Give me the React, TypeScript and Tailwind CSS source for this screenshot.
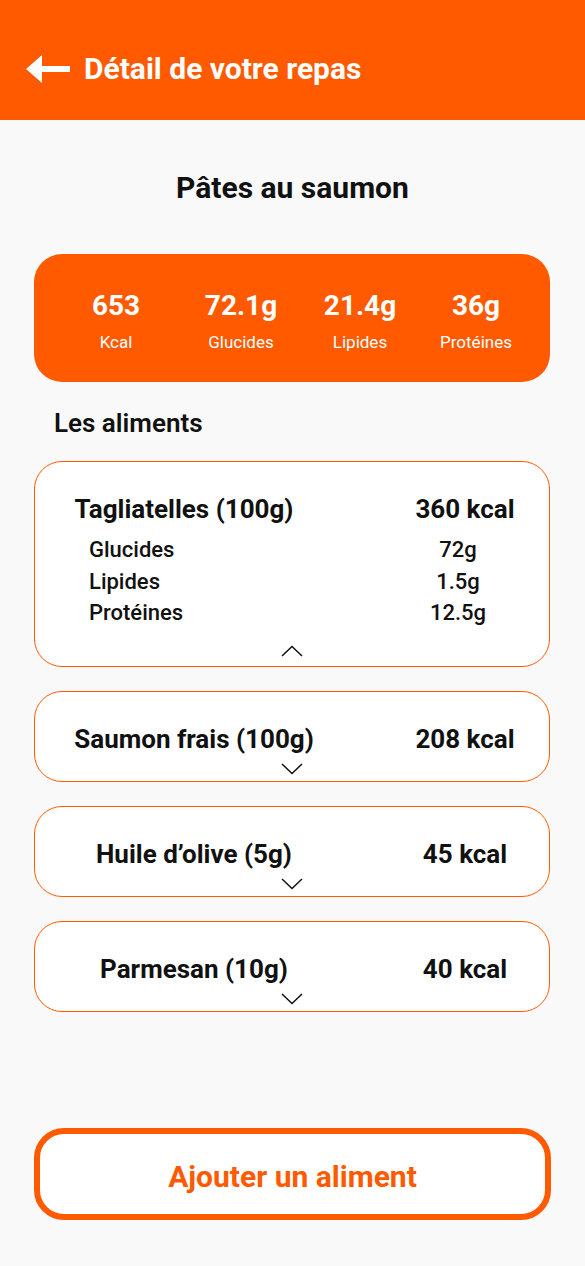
import React from 'react';

interface Food {
  name: string;
  kcal: number;
  details?: { label: string; value: string }[];
}

const foods: Food[] = [
  {
    name: 'Tagliatelles (100g)',
    kcal: 360,
    details: [
      { label: 'Glucides', value: '72g' },
      { label: 'Lipides', value: '1.5g' },
      { label: 'Protéines', value: '12.5g' },
    ],
  },
  { name: 'Saumon frais (100g)', kcal: 208 },
  { name: 'Huile d’olive (5g)', kcal: 45 },
  { name: 'Parmesan (10g)', kcal: 40 },
];

const totals = [
  { value: '653', label: 'Kcal' },
  { value: '72.1g', label: 'Glucides' },
  { value: '21.4g', label: 'Lipides' },
  { value: '36g', label: 'Protéines' },
];

const Chevron = ({ up }: { up?: boolean }) => (
  <svg width="22" height="12" viewBox="0 0 22 12" fill="none">
    <polyline
      points={up ? '1,11 11,1.5 21,11' : '1,1 11,10.5 21,1'}
      stroke="#111"
      strokeWidth="1.5"
    />
  </svg>
);

const FoodCard = ({ food }: { food: Food }) => {
  const open = !!food.details;
  return (
    <div className="w-[516px] rounded-[28px] border-[1.5px] border-[#ff5a00] bg-white pt-[32px]">
      <div className="grid grid-cols-[318px_172px] gap-[26px] text-[26px] font-bold leading-[30px] text-[#111]">
        <div className={open ? 'pr-[20px] text-center' : 'text-center'}>{food.name}</div>
        <div className="text-center">{food.kcal} kcal</div>
      </div>
      {open && (
        <div className="mt-[10px] text-[22px] font-medium leading-[31.5px] text-[#111]">
          {food.details!.map((d) => (
            <div key={d.label} className="grid grid-cols-[338px_170px]">
              <div className="pl-[54px]">{d.label}</div>
              <div className="text-center">{d.value}</div>
            </div>
          ))}
        </div>
      )}
      <div className={open ? 'flex justify-center pt-[16px] pb-[9px]' : 'flex justify-center pt-[9px] pb-[6px]'}>
        <Chevron up={open} />
      </div>
    </div>
  );
};

export default function App() {
  return (
    <div className="min-h-[1266px] w-[585px] bg-[#f9f9f9] pb-[46px] font-['Roboto','Noto_Sans',sans-serif]">
      <header className="h-[120px] bg-[#ff5a00] px-[26px] pt-[51px]">
        <div className="flex items-center gap-[14px]">
          <svg width="44" height="28" viewBox="0 0 44 28" fill="white">
            <polygon points="0,14 16,0 16,11 44,11 44,17 16,17 16,28" />
          </svg>
          <h1 className="text-[30px] font-bold leading-[36px] text-white">Détail de votre repas</h1>
        </div>
      </header>

      <h2 className="mt-[50px] text-center text-[30px] font-bold leading-[36px] text-[#111]">
        Pâtes au saumon
      </h2>

      <div className="px-[34px]">
        <div className="mt-[48px] grid h-[128px] w-[516px] grid-cols-[120px_130px_108px_124px] rounded-[28px] bg-[#ff5a00] pl-[22px] pt-[35px] text-white">
          {totals.map((t) => (
            <div key={t.label} className="flex flex-col items-center">
              <span className="text-[28px] font-bold leading-[34px]">{t.value}</span>
              <span className="mt-[8px] text-[17px] leading-[22px]">{t.label}</span>
            </div>
          ))}
        </div>

        <h3 className="mt-[26px] pl-[20px] text-[26px] font-semibold leading-[30px] text-[#111]">
          Les aliments
        </h3>

        <div className="mt-[23px] flex flex-col gap-[24px]">
          {foods.map((f) => (
            <FoodCard key={f.name} food={f} />
          ))}
        </div>

        <button className="mt-[116px] flex h-[92px] w-[517px] items-center justify-center rounded-[30px] border-[6px] border-[#ff5a00] bg-white pt-[6px] text-[30px] font-bold leading-[36px] text-[#ff5a00]">
          Ajouter un aliment
        </button>
      </div>
    </div>
  );
}
